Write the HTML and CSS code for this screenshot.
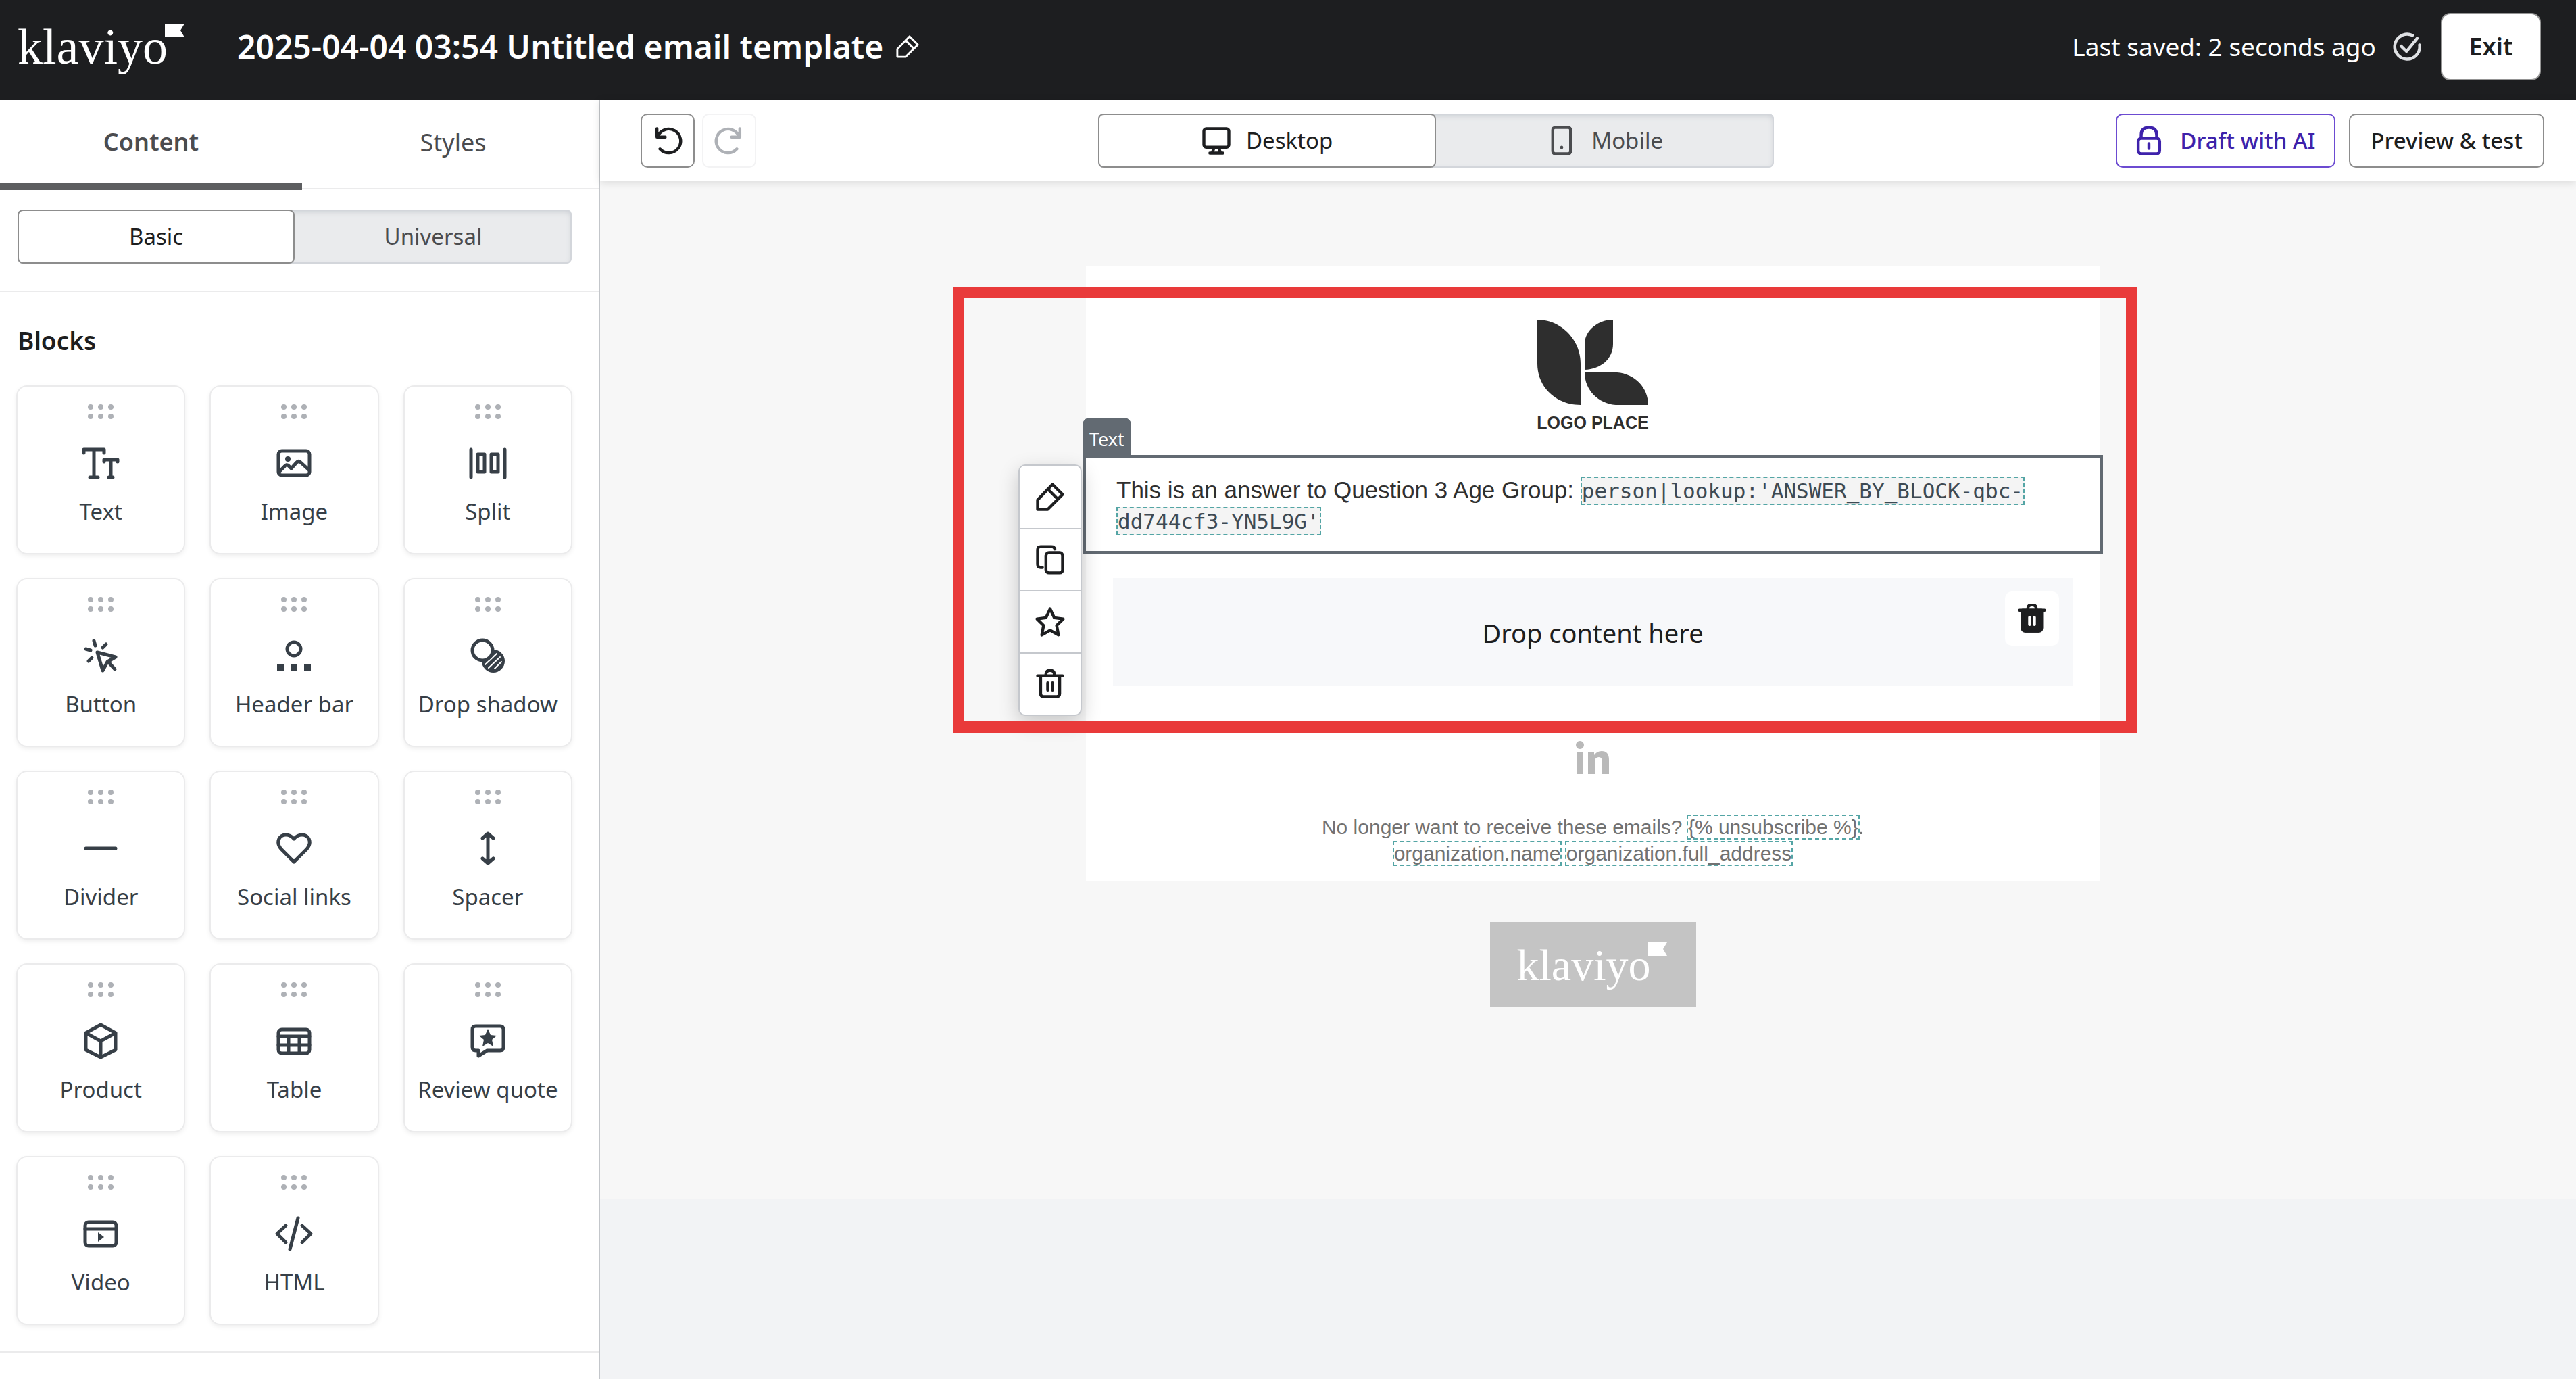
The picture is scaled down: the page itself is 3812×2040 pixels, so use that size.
FILE: index.html
```html
<!DOCTYPE html>
<html lang="en">
<head>
<meta charset="utf-8">
<title>Untitled email template</title>
<link rel="stylesheet" href="styles.css">
</head>
<body>
<svg class="sprite" aria-hidden="true">
  <defs>
    <symbol id="dots" viewBox="0 0 38 22"><g fill="#aeb1b6"><circle cx="4" cy="4" r="4"/><circle cx="19" cy="4" r="4"/><circle cx="34" cy="4" r="4"/><circle cx="4" cy="18" r="4"/><circle cx="19" cy="18" r="4"/><circle cx="34" cy="18" r="4"/></g></symbol>
    <symbol id="pencil" viewBox="0 0 50 50"><path d="M4 46V30L29 4 46 21 21 46Z M21 12 38 29"/></symbol>
    <symbol id="trash" viewBox="0 0 50 50"><path d="M4 11H46M9 11V41Q9 46 14 46H36Q41 46 41 41V11M18 11V8Q18 2 25 2 32 2 32 8V11M21 23V35M29 23V35"/></symbol>
  </defs>
</svg>

<header class="topbar">
  <a class="brand" href="#" aria-label="Klaviyo home"><span>klaviyo</span><svg viewBox="0 0 29 20"><path d="M0 0H29L23 10 29 20H0Z" fill="currentColor"/></svg></a>
  <h1 class="title">2025-04-04 03:54 Untitled email template</h1>
  <button class="rename" aria-label="Rename template"><svg class="line thin" viewBox="0 0 50 50"><use href="#pencil"/></svg></button>
  <span class="saved">Last saved: 2 seconds ago</span>
  <svg class="check line" viewBox="0 0 50 50"><path d="M34 6A21 21 0 1 0 46 22M15 24 24 33 42 11"/></svg>
  <button class="exit">Exit</button>
</header>

<div class="workspace">
  <aside class="sidebar">
    <nav class="tabs">
      <button class="tab tab-active">Content</button>
      <button class="tab">Styles</button>
    </nav>
    <div class="source">
      <div class="segments">
        <button class="segment segment-on">Basic</button>
        <button class="segment">Universal</button>
      </div>
    </div>
    <section class="blocks">
      <h2 class="blocks-title">Blocks</h2>
      <div class="grid">
        <button class="card"><svg class="dots"><use href="#dots"/></svg><svg class="icon" viewBox="0 0 60 60"><path d="M5 15V10H35V15M20 10V51M14 51H26M35 28V25H55V28M45 25V51M42 51H48"/></svg><span>Text</span></button>
        <button class="card"><svg class="dots"><use href="#dots"/></svg><svg class="icon" viewBox="0 0 60 60"><rect x="7" y="12" width="46" height="36" rx="5"/><path d="M9 42 16 35Q19 31 22 34L26 38 34 29Q37 26 40 29L52 40"/><circle cx="21" cy="24" r="4" class="solid"/></svg><span>Image</span></button>
        <button class="card"><svg class="dots"><use href="#dots"/></svg><svg class="icon" viewBox="0 0 60 60"><path d="M5 10V51M55 10V51M15 17H25V43H15ZM35 17H45V43H35Z"/></svg><span>Split</span></button>
        <button class="card"><svg class="dots"><use href="#dots"/></svg><svg class="icon" viewBox="0 0 60 60"><path d="M25 25 52 32 40 39 33 52ZM41 39 51 50M20 8 22 15M38 13 33 18M8 20 15 22M12 38 17 33"/></svg><span>Button</span></button>
        <button class="card"><svg class="dots"><use href="#dots"/></svg><svg class="icon" viewBox="0 0 60 60"><circle cx="30" cy="20" r="10"/><path class="solid" d="M5 42H15V52H5ZM25 42H35V52H25ZM45 42H55V52H45Z"/></svg><span>Header bar</span></button>
        <button class="card"><svg class="dots"><use href="#dots"/></svg><svg class="icon" viewBox="0 0 60 60"><circle class="solid" cx="38" cy="38" r="17"/><path class="hatch" d="M26 43 43 27M31 48 48 32M40 49 50 39"/><circle class="front" cx="22" cy="22" r="15"/></svg><span>Drop shadow</span></button>
        <button class="card"><svg class="dots"><use href="#dots"/></svg><svg class="icon" viewBox="0 0 60 60"><path d="M8 30H52"/></svg><span>Divider</span></button>
        <button class="card"><svg class="dots"><use href="#dots"/></svg><svg class="icon" viewBox="0 0 60 60"><path d="M30 50 11 31C2 20 9 10 18 10Q25 10 30 16 35 10 42 10C51 10 58 20 49 31Z"/></svg><span>Social links</span></button>
        <button class="card"><svg class="dots"><use href="#dots"/></svg><svg class="icon" viewBox="0 0 60 60"><path d="M30 8V52M22 15 30 8 38 15M22 45 30 52 38 45"/></svg><span>Spacer</span></button>
        <button class="card"><svg class="dots"><use href="#dots"/></svg><svg class="icon" viewBox="0 0 60 60"><path d="M30 6 52 18V43L30 54 8 43V18ZM8 18 30 30 52 18M30 30V54"/></svg><span>Product</span></button>
        <button class="card"><svg class="dots"><use href="#dots"/></svg><svg class="icon" viewBox="0 0 60 60"><rect x="7" y="13" width="46" height="35" rx="5"/><path d="M7 23H53M7 36H53M22 23V48M38 23V48"/></svg><span>Table</span></button>
        <button class="card"><svg class="dots"><use href="#dots"/></svg><svg class="icon" viewBox="0 0 60 60"><path d="M12 8H48Q53 8 53 13V39Q53 44 48 44H29L16 52V44H12Q7 44 7 39V13Q7 8 12 8Z"/><path class="solid" d="M30 12 34 21 43 22 36 28 38 38 30 33 22 38 24 28 17 22 26 21Z"/></svg><span>Review quote</span></button>
        <button class="card"><svg class="dots"><use href="#dots"/></svg><svg class="icon" viewBox="0 0 60 60"><rect x="7" y="13" width="46" height="35" rx="5"/><path d="M7 23H53"/><path class="solid" d="M26 28V42L35 35Z"/></svg><span>Video</span></button>
        <button class="card"><svg class="dots"><use href="#dots"/></svg><svg class="icon" viewBox="0 0 60 60"><path d="M18 18 5 30 18 43M42 18 55 30 42 43M36 7 24 53"/></svg><span>HTML</span></button>
      </div>
    </section>
  </aside>

  <main class="main">
    <div class="toolbar">
      <div class="history">
        <button class="tool" aria-label="Undo"><svg class="line" viewBox="0 0 50 50"><path d="M7 5V19H21M8 19A20 20 0 1 1 12 39"/></svg></button>
        <button class="tool tool-off" aria-label="Redo" disabled><svg class="line" viewBox="0 0 50 50"><path d="M43 5V19H29M42 19A20 20 0 1 0 38 39"/></svg></button>
      </div>
      <div class="segments device">
        <button class="segment segment-on"><svg class="line" viewBox="0 0 50 50"><rect x="4" y="5" width="42" height="31" rx="4"/><path d="M21 37 18 46M29 37 32 46M14 46H36"/></svg>Desktop</button>
        <button class="segment"><svg class="line" viewBox="0 0 50 50"><rect x="10" y="3" width="30" height="44" rx="4"/><path d="M25 36V37"/></svg>Mobile</button>
      </div>
      <div class="actions">
        <button class="action action-ai"><svg class="line" viewBox="0 0 50 50"><rect x="7" y="21" width="36" height="26" rx="5"/><path d="M12 20V15Q12 3 25 3 38 3 38 15V20M25 30V38"/></svg>Draft with AI</button>
        <button class="action">Preview &amp; test</button>
      </div>
    </div>

    <div class="canvas">
      <div class="email">
        <figure class="logo">
          <svg viewBox="0 0 164 126"><path fill="#2e2e2e" d="M0 0C36 0 64 30 64 65V126C28 126 0 100 0 65ZM112 0V36C112 58 94 73 70 74V36C70 16 90 0 112 0ZM70 78H118C144 80 164 100 164 126H116C90 124 70 104 70 78Z"/></svg>
          <figcaption>LOGO PLACE</figcaption>
        </figure>
        <div class="selected">
          <span class="tag">Text</span>
          <div class="block-tools">
            <button aria-label="Edit"><svg class="line" viewBox="0 0 50 50"><use href="#pencil"/></svg></button>
            <button aria-label="Duplicate"><svg class="line" viewBox="0 0 50 50"><rect x="18" y="13" width="28" height="34" rx="5"/><path d="M12 38H9Q4 38 4 33V8Q4 3 9 3H27Q32 3 33 7"/></svg></button>
            <button aria-label="Favorite"><svg class="line" viewBox="0 0 50 50"><path d="M25 3 32 18 47 20 36 31 39 47 25 39 11 47 14 31 3 20 18 18Z"/></svg></button>
            <button aria-label="Delete"><svg class="line" viewBox="0 0 50 50"><use href="#trash"/></svg></button>
          </div>
          <p class="copy">This is an answer to Question 3 Age Group: <code class="token">person|lookup:'ANSWER_BY_BLOCK-qbc-<br>dd744cf3-YN5L9G'</code></p>
        </div>
        <div class="drop">
          Drop content here
          <button class="drop-delete" aria-label="Remove section"><svg class="line" viewBox="0 0 50 50"><path class="solid" d="M9 11H41V41Q41 46 36 46H14Q9 46 9 41Z"/><use href="#trash"/><path d="M21 23V35M29 23V35" stroke="#fff"/></svg></button>
        </div>
        <a class="social" href="#" aria-label="LinkedIn"><svg viewBox="0 0 50 50"><circle cx="6" cy="6" r="6"/><path d="M1 16H11V49H1ZM18 16H27V21Q31 15 38 15 49 15 49 28V49H39V31Q39 24 34 24 28 24 28 31V49H18Z"/></svg></a>
        <p class="legal">No longer want to receive these emails? <span class="token">{% unsubscribe %}</span>.<br><span class="token">organization.name</span> <span class="token">organization.full_address</span></p>
        <div class="frame"></div>
      </div>
      <div class="badge brand"><span>klaviyo</span><svg viewBox="0 0 29 20"><path d="M0 0H29L23 10 29 20H0Z" fill="currentColor"/></svg></div>
    </div>
  </main>
</div>
</body>
</html>
```
FILE: styles.css
```css
* { box-sizing: border-box; }

body {
  margin: 0;
  min-height: 100vh;
  display: flex;
  flex-direction: column;
  background: #fff;
  color: #1d1e20;
  font: 36px/48px "Noto Sans", "Open Sans", sans-serif;
}

button {
  margin: 0;
  padding: 0;
  border: 0;
  background: none;
  color: inherit;
  font: inherit;
}

h1, h2, p, figure { margin: 0; }

.sprite { position: absolute; width: 0; height: 0; }

.line {
  width: 44px;
  height: 44px;
  flex: none;
  fill: none;
  stroke: currentColor;
  stroke-width: 5;
  stroke-linecap: round;
  stroke-linejoin: round;
}

.line .solid { fill: currentColor; }
.thin { width: 36px; height: 36px; stroke-width: 4; }

/* Top bar */
.topbar {
  display: flex;
  align-items: center;
  height: 148px;
  padding: 0 52px 10px 26px;
  background: #1d1e20;
  color: #fff;
}

.brand {
  display: flex;
  color: #fff;
  font: 74px/80px "Liberation Serif", serif;
  text-decoration: none;
}

.brand svg { width: 29px; height: 20px; margin: 6px 0 0 -4px; }

.title {
  margin-left: 78px;
  font-size: 48px;
  line-height: 64px;
  font-weight: 600;
}

.rename { display: flex; margin-left: 18px; }
.saved { margin-left: auto; font-size: 37px; }
.check { margin: 0 28px 0 24px; color: #dfe1e4; }

.exit {
  width: 148px;
  height: 100px;
  border: 2px solid #949494;
  border-radius: 14px;
  background: #fff;
  color: #1d1e20;
  font-size: 36px;
  font-weight: 600;
}

.workspace { display: flex; flex: 1; }

/* Sidebar */
.sidebar {
  width: 888px;
  flex: none;
  border-right: 2px solid #c3c6ca;
}

.tabs {
  display: flex;
  height: 132px;
  border-bottom: 2px solid #ebebec;
}

.tab {
  flex: 0 0 447px;
  height: 133px;
  padding-bottom: 8px;
  color: #4b4c4f;
}

.tab-active {
  border-bottom: 10px solid #5d5e60;
  border-radius: 0 8px 0 0;
  padding-bottom: 0;
  font-weight: 600;
}

.source {
  padding: 30px 40px 40px 26px;
  border-bottom: 2px solid #ebebec;
}

.segments {
  display: flex;
  height: 80px;
  border-radius: 8px;
  background: #eaebed;
  box-shadow: inset 0 0 0 2px #d3d6db, inset 0 3px 8px #c9cdd2;
  font-size: 33px;
}

.segment {
  display: flex;
  flex: 1;
  align-items: center;
  justify-content: center;
  gap: 22px;
  border: 2px solid transparent;
  color: #4b4c4f;
}

.segment-on {
  border-color: #8d8d8d;
  border-radius: 8px;
  background: #fff;
  color: #1d1e20;
}

.blocks {
  padding: 44px 41px 41px 26px;
  border-bottom: 2px solid #ebebec;
}

.blocks-title {
  font-size: 37px;
  line-height: 56px;
  font-weight: 600;
}

.grid {
  display: grid;
  grid-template-columns: repeat(3, 1fr);
  gap: 39px 40px;
  margin-top: 40px;
}

.card {
  display: flex;
  flex-direction: column;
  align-items: center;
  height: 246px;
  padding-top: 26px;
  border-radius: 14px;
  background: #fff;
  box-shadow: 0 0 0 2px #ebebec, 0 3px 8px #0000001a;
  color: #373f47;
  font-size: 33px;
  white-space: nowrap;
}

.dots { width: 38px; height: 22px; }

.icon {
  width: 60px;
  height: 60px;
  margin: 35px 0 18px;
  fill: none;
  stroke: currentColor;
  stroke-width: 5;
  stroke-linecap: round;
  stroke-linejoin: round;
}

.icon .solid { fill: currentColor; stroke: none; }
.icon .hatch { stroke: #fff; stroke-width: 2; }
.icon .front { fill: #fff; }

/* Editor */
.main { display: flex; flex: 1; flex-direction: column; }

.toolbar {
  display: flex;
  align-items: center;
  justify-content: space-between;
  height: 120px;
  padding: 0 47px 0 60px;
  box-shadow: 0 2px 12px #0000001f;
  z-index: 1;
}

.history, .actions { display: flex; gap: 11px; }
.actions { gap: 20px; }
.device { width: 1000px; }

.tool, .action {
  display: flex;
  align-items: center;
  justify-content: center;
  height: 80px;
  border: 2px solid #8d8d8d;
  border-radius: 10px;
}

.tool { width: 80px; }
.tool-off { border-color: #f3f3f4; color: #aeb1b6; }
.action { gap: 24px; padding: 0 30px; font-size: 33px; font-weight: 500; }
.action-ai { padding: 0 28px 0 25px; border-color: #6c4bd1; color: #3e22ab; }

.canvas {
  flex: 1;
  padding: 125px 0 280px 14px;
  background: linear-gradient(#f7f7f7 1506px, #f2f3f5 1506px);
}

.email {
  position: relative;
  width: 1500px;
  margin: 0 auto;
  padding-bottom: 22px;
  background: #fff;
}

.logo {
  padding: 80px 0 37px;
  text-align: center;
  color: #2e2e2e;
  font: bold 25px/30px "Liberation Sans", Arial, sans-serif;
}

.logo svg { display: block; width: 164px; height: 126px; margin: 0 auto 11px; }

.selected {
  position: relative;
  margin: -4px -5px 0;
  padding: 24px 45px 23px;
  border: 5px solid #626a72;
}

.tag {
  position: absolute;
  left: -5px;
  bottom: 100%;
  padding: 10px 10px 6px;
  border-radius: 10px 10px 0 0;
  background: #626a72;
  color: #fff;
  font-size: 27px;
  line-height: 44px;
}

.copy {
  color: #303030;
  font: 35px/45px "Liberation Sans", Arial, sans-serif;
}

.token { outline: 2px dashed #54a5a5; }

code.token {
  outline: 0;
  padding: 1px 0;
  border: 2px dashed #54a5a5;
  background: #f4f4f4;
  color: #3e4a53;
  font: 31px/30px "DejaVu Sans Mono", monospace;
  -webkit-box-decoration-break: clone;
  box-decoration-break: clone;
}

.block-tools {
  position: absolute;
  top: 9px;
  right: calc(100% + 6px);
  width: 94px;
  border: 2px solid #c5c8cd;
  border-radius: 10px;
  background: #fff;
  box-shadow: 0 10px 30px #00000033;
}

.block-tools button {
  display: flex;
  align-items: center;
  justify-content: center;
  width: 100%;
  height: 92px;
}

.block-tools button + button { border-top: 2px solid #c5c8cd; }

.drop {
  position: relative;
  margin: 35px 40px 0;
  padding: 53px 0 51px;
  background: #f7f8fa;
  text-align: center;
  font-size: 38px;
  line-height: 56px;
}

.drop-delete {
  position: absolute;
  top: 20px;
  right: 20px;
  display: flex;
  align-items: center;
  justify-content: center;
  width: 80px;
  height: 80px;
  border-radius: 10px;
  background: #fff;
}

.social { display: block; width: 50px; margin: 81px auto 0; }
.social svg { display: block; width: 50px; height: 50px; fill: #b9b9b9; }

.legal {
  margin-top: 58px;
  color: #727272;
  font: 30px/39px "Liberation Sans", Arial, sans-serif;
  text-align: center;
}

.frame {
  position: absolute;
  top: 31px;
  left: -197px;
  right: -56px;
  height: 660px;
  border: 17px solid #e93a3a;
  pointer-events: none;
}

.badge {
  width: 305px;
  height: 125px;
  margin: 60px auto 0;
  padding: 24px 0 0 40px;
  background: #c4c4c4;
  font-size: 66px;
}
```
